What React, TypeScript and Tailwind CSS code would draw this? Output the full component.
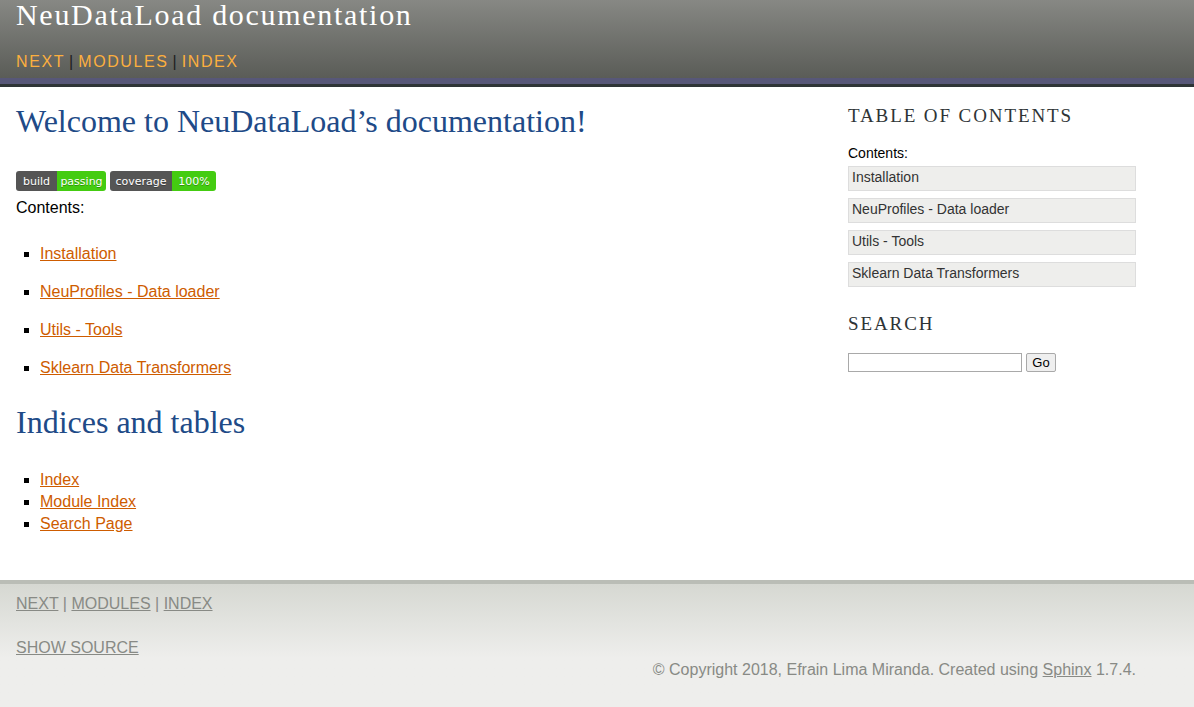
import React from "react";

const tocLinks = [
    "Installation",
    "NeuProfiles - Data loader",
    "Utils - Tools",
    "Sklearn Data Transformers",
];

const indexLinks = ["Index", "Module Index", "Search Page"];

const Badge = ({ label, value, labelW, valueW }: { label: string; value: string; labelW: number; valueW: number }) => (
    <span className="inline-flex h-[20px] rounded-[3px] overflow-hidden text-[11px] leading-[21px] text-white font-['DejaVu_Sans',sans-serif] [text-shadow:0_1px_0_rgba(1,1,1,0.3)]">
        <span className="bg-[#555] text-center" style={{ width: labelW }}>{label}</span>
        <span className="bg-[#4c1] text-center" style={{ width: valueW }}>{value}</span>
    </span>
);

export default function App() {
    return (
        <div className="min-h-[707px] flex flex-col bg-white font-['Liberation_Sans',Arial,sans-serif]">
            {/* header */}
            <div className="bg-gradient-to-b from-[#878884] to-[#575954] border-b-[3px] border-[#2e3436]">
                <div className="px-4 h-[78px]">
                    <div className="text-[30px] leading-[30px] tracking-[1.7px] text-white font-['Liberation_Serif',serif]">
                        NeuDataLoad documentation
                    </div>
                    <div className="mt-[22px] text-[16px] leading-[20px] tracking-[0.1em] text-[#1e1e1e]">
                        <a className="text-[#fcaf3e]" href="#">NEXT</a>
                        <span className="ml-[4px] mr-[5px] tracking-normal">|</span>
                        <a className="text-[#fcaf3e]" href="#">MODULES</a>
                        <span className="ml-[4px] mr-[5px] tracking-normal">|</span>
                        <a className="text-[#fcaf3e]" href="#">INDEX</a>
                    </div>
                </div>
                <div className="h-[6px] bg-[#575778]" />
            </div>

            {/* body */}
            <div className="flex-1 flex pb-[40px]">
                <div className="flex-1 pl-4">
                    <h1 className="mt-[14px] text-[32px] leading-[40px] text-[#204a87] font-['Liberation_Serif',serif]">
                        Welcome to NeuDataLoad’s documentation!
                    </h1>
                    <div className="mt-[30px] flex gap-[4px]">
                        <Badge label="build" value="passing" labelW={41} valueW={49} />
                        <Badge label="coverage" value="100%" labelW={62} valueW={44} />
                    </div>
                    <p className="mt-[5px] text-[16px] leading-[24px] text-black">Contents:</p>
                    <ul className="mt-[24px] pl-[24px] list-[square] text-[16px] leading-[20px]">
                        {tocLinks.map((t) => (
                            <li key={t} className="mb-[18px]">
                                <a href="#" className="text-[#ce5c00] underline">{t}</a>
                            </li>
                        ))}
                    </ul>
                    <h2 className="mt-[24px] text-[32px] leading-[40px] text-[#204a87] font-['Liberation_Serif',serif]">
                        Indices and tables
                    </h2>
                    <ul className="mt-[27px] pl-[24px] list-[square] text-[16px] leading-[22px]">
                        {indexLinks.map((t) => (
                            <li key={t}>
                                <a href="#" className="text-[#ce5c00] underline">{t}</a>
                            </li>
                        ))}
                    </ul>
                </div>

                {/* sidebar */}
                <div className="w-[288px] mr-[58px] pt-[17px]">
                    <h3 className="text-[19px] leading-[24px] tracking-[0.1em] text-[#2e3436] font-['Liberation_Serif',serif]">
                        TABLE OF CONTENTS
                    </h3>
                    <p className="mt-[16px] mb-[4px] text-[14px] leading-[18px] text-black">Contents:</p>
                    <div className="flex flex-col gap-[7px]">
                        {tocLinks.map((t) => (
                            <div key={t} className="h-[25px] bg-[#eeeeec] border border-[#dddddd] px-[3px] text-[14px] leading-[20px] text-[#333]">
                                {t}
                            </div>
                        ))}
                    </div>
                    <h3 className="mt-[25px] text-[19px] leading-[24px] tracking-[0.1em] text-[#2e3436] font-['Liberation_Serif',serif]">
                        SEARCH
                    </h3>
                    <div className="mt-[17px] flex items-center gap-[4px]">
                        <input className="w-[174px] h-[19px] border border-[#a9a9a9] bg-white" />
                        <button className="h-[19px] w-[30px] text-[13px] leading-[17px] text-black bg-[#efefef] border border-[#a9a9a9] rounded-[2px]">
                            Go
                        </button>
                    </div>
                </div>
            </div>

            {/* footer */}
            <div className="border-t-[4px] border-[#babdb6] bg-gradient-to-b from-[#d6d8d2] to-[#eeeeec] to-[60%] text-[#888a85] text-[16px] pb-[25px]">
                <div className="px-4 pt-[10px] leading-[20px]">
                    <a href="#" className="underline">NEXT</a> | <a href="#" className="underline">MODULES</a> |{" "}
                    <a href="#" className="underline">INDEX</a>
                </div>
                <div className="px-4 mt-[24px] leading-[20px]">
                    <a href="#" className="underline">SHOW SOURCE</a>
                </div>
                <div className="mr-[58px] text-right leading-[24px]">
                    © Copyright 2018, Efrain Lima Miranda. Created using <a href="#" className="underline">Sphinx</a> 1.7.4.
                </div>
            </div>
        </div>
    );
}
